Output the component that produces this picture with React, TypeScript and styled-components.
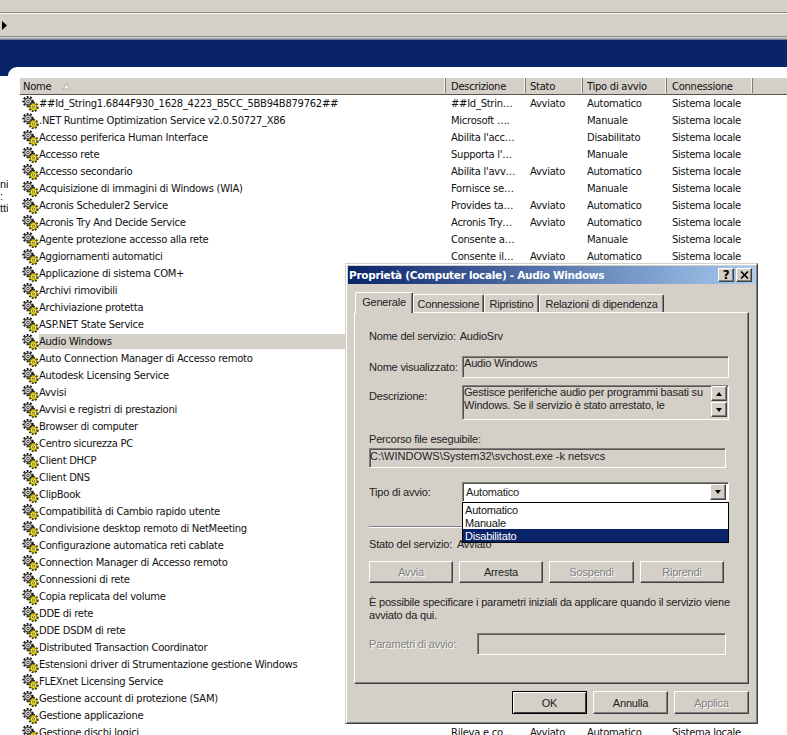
import React from "react";
import styled, { createGlobalStyle } from "styled-components";

const FACE = "#d4d0c8";
const NAVY = "#0a246a";
const COLUMNS = "426px 80px 57px 84px 86px 1fr";

const Global = createGlobalStyle`
  html, body { margin: 0; padding: 0; background: #fff; }
  body { width: 787px; height: 735px; overflow: hidden; }
  #root { width: 787px; height: 735px; overflow: hidden; }
`;

const Page = styled.div`
  position: relative;
  width: 787px;
  height: 735px;
  overflow: hidden;
  display: flex;
  flex-direction: column;
  background: #fff;
  font-family: "DejaVu Sans", Verdana, sans-serif;
  font-size: 10px;
  letter-spacing: -0.28px;
  color: #111;
`;

const MenuStrip = styled.div`
  height: 12px;
  flex: none;
  background: ${FACE};
  border-bottom: 1px solid #8c8a84;
  box-shadow: inset 0 -1px 0 ${FACE};
`;

const ToolStrip = styled.div`
  height: 22px;
  flex: none;
  display: flex;
  align-items: center;
  padding-left: 2px;
  background: ${FACE};
  border-top: 1px solid #f4f3ef;
  border-bottom: 1px solid #8c8a84;
`;

const Shade = styled.div`
  height: 3px;
  flex: none;
  background: linear-gradient(#e8e6e0, #5d6a8c);
`;

const Banner = styled.div`
  height: 27px;
  flex: none;
  background: ${NAVY};
`;

const Workspace = styled.div`
  flex: 1;
  min-height: 0;
  display: flex;
  background: linear-gradient(${NAVY} 9px, #fff 9px);
`;

const Gutter = styled.div`
  width: 8px;
  flex: none;
  overflow: hidden;
  padding-top: 111px;
  font-family: "Liberation Sans", Arial, sans-serif;
  font-size: 11px;
  letter-spacing: 0;
  line-height: 12px;
`;

const Panel = styled.div`
  flex: 1;
  min-width: 0;
  background: #fff;
  border-top-left-radius: 9px;
  padding: 11px 0 0 12px;
  overflow: hidden;
`;

const HeaderRow = styled.div`
  display: grid;
  grid-template-columns: ${COLUMNS};
  height: 15px;
  padding-bottom: 1px;
  background: ${FACE};
  border-bottom: 1px solid #55534e;
`;

const HeaderCell = styled.div<{ $pad: number }>`
  display: flex;
  align-items: center;
  gap: 11px;
  padding-top: 1px;
  padding-left: ${(p) => p.$pad}px;
  border-right: 1px solid #7d7b76;
  box-shadow: inset -1px 0 0 #f4f3ef;
  white-space: nowrap;
  overflow: hidden;
  &:last-child { border-right: none; box-shadow: none; }
`;

const Row = styled.div`
  display: grid;
  grid-template-columns: ${COLUMNS};
  height: 17px;
  align-items: center;
  white-space: nowrap;
`;

const NameCell = styled.div`
  display: flex;
  align-items: center;
  height: 17px;
  padding-left: 2px;
`;

const NameText = styled.span<{ $selected?: boolean }>`
  flex: 1;
  line-height: 15px;
  background: ${(p) => (p.$selected ? FACE : "transparent")};
`;

const Cell = styled.div<{ $pad: number }>`
  padding-left: ${(p) => p.$pad}px;
  line-height: 15px;
  overflow: hidden;
`;

const Dialog = styled.div`
  position: absolute;
  left: 345px;
  top: 263px;
  width: 413px;
  height: 461px;
  box-sizing: border-box;
  background: ${FACE};
  border: 1px solid;
  border-color: ${FACE} #404040 #404040 ${FACE};
  box-shadow: inset 1px 1px 0 #fff, inset -1px -1px 0 #808080;
  padding: 2px 2px 0 2px;
  display: flex;
  flex-direction: column;
  font-family: "Liberation Sans", Arial, sans-serif;
  font-size: 11px;
  letter-spacing: -0.2px;
  color: #222;
`;

const TitleBar = styled.div`
  height: 18px;
  flex: none;
  display: flex;
  align-items: center;
  justify-content: space-between;
  padding: 0 3px 0 1px;
  background: linear-gradient(90deg, ${NAVY}, #a6caf0);
  color: #fff;
  font-family: "DejaVu Sans", Verdana, sans-serif;
  font-size: 10.5px;
  font-weight: 700;
  letter-spacing: -0.3px;
  white-space: nowrap;
`;

const TitleButtons = styled.div`
  display: flex;
  gap: 2px;
`;

const raised = `
  background: ${FACE};
  border: 1px solid;
  border-color: #fff #404040 #404040 #fff;
  box-shadow: inset -1px -1px 0 #808080;
  box-sizing: border-box;
`;

const sunken = `
  border: 1px solid;
  border-color: #808080 #fff #fff #808080;
  box-shadow: inset 1px 1px 0 #55534e;
  box-sizing: border-box;
`;

const TitleButton = styled.div`
  ${raised}
  width: 16px;
  height: 14px;
  display: flex;
  align-items: center;
  justify-content: center;
  color: #000;
  font-size: 12px;
`;

const DialogBody = styled.div`
  flex: 1;
  padding: 8px 6px 0 6px;
  display: flex;
  flex-direction: column;
`;

const TabStrip = styled.div`
  height: 20px;
  flex: none;
  display: flex;
  align-items: flex-end;
  padding-left: 1px;
  position: relative;
  z-index: 1;
`;

const Tab = styled.div<{ $active?: boolean; $width: number }>`
  width: ${(p) => p.$width}px;
  height: ${(p) => (p.$active ? 21 : 18)}px;
  margin-bottom: ${(p) => (p.$active ? -1 : 0)}px;
  box-sizing: border-box;
  background: ${FACE};
  border: 1px solid;
  border-color: #fff #404040 transparent #fff;
  border-bottom: none;
  box-shadow: inset -1px 0 0 #808080;
  border-radius: 2px 2px 0 0;
  display: flex;
  justify-content: center;
  padding-top: 3px;
  white-space: nowrap;
`;

const TabPage = styled.div`
  height: 372px;
  flex: none;
  box-sizing: border-box;
  border: 1px solid;
  border-color: #fff #404040 #404040 #fff;
  box-shadow: inset -1px -1px 0 #808080;
  padding: 15px 18px 0 14px;
`;

const FormRow = styled.div<{ $top: number; $height: number }>`
  display: grid;
  grid-template-columns: 93px 267px;
  align-items: center;
  margin-top: ${(p) => p.$top}px;
  height: ${(p) => p.$height}px;
  white-space: nowrap;
  position: relative;
`;

const Label = styled.div<{ $disabled?: boolean }>`
  color: ${(p) => (p.$disabled ? "#808080" : "inherit")};
  text-shadow: ${(p) => (p.$disabled ? "1px 1px 0 #fff" : "none")};
`;

const TopLabel = styled(Label)`
  align-self: start;
  margin-top: 5px;
`;

const PlainLine = styled.div<{ $top: number; $height: number }>`
  margin-top: ${(p) => p.$top}px;
  height: ${(p) => p.$height}px;
  line-height: ${(p) => p.$height}px;
  white-space: nowrap;
`;

const Value = styled.span<{ $left: number }>`
  margin-left: ${(p) => p.$left}px;
`;

const ReadField = styled.div`
  ${sunken}
  height: 100%;
  padding: 0 1px;
  line-height: 13px;
  overflow: hidden;
  white-space: normal;
`;

const DescriptionField = styled(ReadField)`
  display: flex;
  justify-content: space-between;
  padding: 0 1px 0 1px;
`;

const SpinColumn = styled.div`
  display: flex;
  flex-direction: column;
  gap: 1px;
  flex: none;
`;

const SpinButton = styled.div`
  ${raised}
  width: 16px;
  height: 15px;
  display: flex;
  align-items: center;
  justify-content: center;
`;

const PathField = styled(ReadField)`
  width: 357px;
  height: 20px;
  margin-top: 2px;
  padding: 1px 0;
  letter-spacing: 0;
`;

const SelectBox = styled.div`
  ${sunken}
  height: 100%;
  background: #fff;
  position: relative;
  display: flex;
  align-items: center;
  justify-content: space-between;
  padding: 0 2px 0 3px;
`;

const SelectArrow = styled(SpinButton)`
  height: 16px;
`;

const DropList = styled.div`
  position: absolute;
  left: -1px;
  top: calc(100% + 1px);
  width: 267px;
  box-sizing: border-box;
  background: #fff;
  border: 1px solid #000;
  z-index: 2;
`;

const DropItem = styled.div<{ $selected?: boolean }>`
  height: 13px;
  line-height: 15px;
  padding-left: 2px;
  background: ${(p) => (p.$selected ? NAVY : "#fff")};
  color: ${(p) => (p.$selected ? "#fff" : "#111")};
`;

const Separator = styled.div`
  width: 357px;
  height: 1px;
  margin-top: 24px;
  background: #808080;
  border-bottom: 1px solid #fff;
`;

const ActionRow = styled.div`
  display: flex;
  gap: 6px;
  width: 357px;
  margin-top: 9px;
`;

const ActionButton = styled.div<{ $disabled?: boolean; $width?: number }>`
  ${raised}
  width: ${(p) => p.$width ?? 84}px;
  height: 22px;
  display: flex;
  align-items: center;
  justify-content: center;
  color: ${(p) => (p.$disabled ? "#808080" : "#222")};
  text-shadow: ${(p) => (p.$disabled ? "1px 1px 0 #fff" : "none")};
`;

const Paragraph = styled.div`
  width: 366px;
  margin-top: 13px;
  line-height: 13px;
  height: 26px;
`;

const ParamRow = styled.div`
  display: flex;
  align-items: center;
  justify-content: space-between;
  width: 357px;
  height: 22px;
  margin-top: 11px;
`;

const ParamField = styled.div`
  ${sunken}
  width: 249px;
  height: 22px;
`;

const Footer = styled.div`
  display: flex;
  justify-content: flex-end;
  gap: 6px;
  margin-top: 7px;
`;

const DefaultButton = styled(ActionButton)`
  height: 23px;
  border: 1px solid #000;
  box-shadow: inset 1px 1px 0 #fff, inset -1px -1px 0 #404040;
`;

const FooterButton = styled(ActionButton)`
  height: 23px;
`;

const GearIcon = () => (
  <svg width="17" height="16" viewBox="0 0 17 16" style={{ flex: "none" }}>
    <circle cx="6" cy="5.5" r="4.6" fill="none" stroke="#1c1c1c" strokeWidth="2.2" strokeDasharray="1.8 1.5" />
    <circle cx="6" cy="5.5" r="3.5" fill="#cfcdc5" stroke="#3a3a3a" strokeWidth="1" />
    <circle cx="6" cy="5.5" r="1.2" fill="#fff" stroke="#222" strokeWidth="0.8" />
    <circle cx="11.5" cy="11" r="4" fill="none" stroke="#33310c" strokeWidth="2.4" strokeDasharray="1.7 1.3" />
    <circle cx="11.5" cy="11" r="3.4" fill="#f2e218" stroke="#6e650c" strokeWidth="0.8" />
    <circle cx="11.5" cy="11" r="1.1" fill="#fff" stroke="#4c4606" strokeWidth="0.7" />
  </svg>
);

const UpTri = () => (
  <svg width="8" height="6" viewBox="0 0 8 6"><path d="M4 1 7 5H1Z" fill="#000" /></svg>
);
const DownTri = () => (
  <svg width="8" height="6" viewBox="0 0 8 6"><path d="M1 1H7L4 5Z" fill="#000" /></svg>
);

type Svc = [string, string?, string?, string?];
const services: Svc[] = [
  ["##Id_String1.6844F930_1628_4223_B5CC_5BB94B879762##", "##Id_Strin…", "Avviato", "Automatico"],
  [".NET Runtime Optimization Service v2.0.50727_X86", "Microsoft ….", "", "Manuale"],
  ["Accesso periferica Human Interface", "Abilita l'acc…", "", "Disabilitato"],
  ["Accesso rete", "Supporta l'…", "", "Manuale"],
  ["Accesso secondario", "Abilita l'avv…", "Avviato", "Automatico"],
  ["Acquisizione di immagini di Windows (WIA)", "Fornisce se…", "", "Manuale"],
  ["Acronis Scheduler2 Service", "Provides ta…", "Avviato", "Automatico"],
  ["Acronis Try And Decide Service", "Acronis Try…", "Avviato", "Automatico"],
  ["Agente protezione accesso alla rete", "Consente a…", "", "Manuale"],
  ["Aggiornamenti automatici", "Consente il…", "Avviato", "Automatico"],
  ["Applicazione di sistema COM+"],
  ["Archivi rimovibili"],
  ["Archiviazione protetta"],
  ["ASP.NET State Service"],
  ["Audio Windows"],
  ["Auto Connection Manager di Accesso remoto"],
  ["Autodesk Licensing Service"],
  ["Avvisi"],
  ["Avvisi e registri di prestazioni"],
  ["Browser di computer"],
  ["Centro sicurezza PC"],
  ["Client DHCP"],
  ["Client DNS"],
  ["ClipBook"],
  ["Compatibilità di Cambio rapido utente"],
  ["Condivisione desktop remoto di NetMeeting"],
  ["Configurazione automatica reti cablate"],
  ["Connection Manager di Accesso remoto"],
  ["Connessioni di rete"],
  ["Copia replicata del volume"],
  ["DDE di rete"],
  ["DDE DSDM di rete"],
  ["Distributed Transaction Coordinator"],
  ["Estensioni driver di Strumentazione gestione Windows"],
  ["FLEXnet Licensing Service"],
  ["Gestione account di protezione (SAM)"],
  ["Gestione applicazione"],
  ["Gestione dischi logici", "Rileva e co…", "Avviato", "Automatico"],
];

export default function App() {
  return (
    <Page>
      <Global />
      <MenuStrip />
      <ToolStrip>
        <svg width="5" height="9" viewBox="0 0 5 9"><path d="M0 0 5 4.5 0 9Z" fill="#000" /></svg>
      </ToolStrip>
      <Shade />
      <Banner />
      <Workspace>
        <Gutter>
          <div>ni</div>
          <div>:</div>
          <div>tti</div>
        </Gutter>
        <Panel>
          <HeaderRow>
            <HeaderCell $pad={3}>
              Nome
              <svg width="9" height="8" viewBox="0 0 9 8"><path d="M4.5 1 8 7H1Z" fill="#eeece6" stroke="#a8a69f" strokeWidth="0.8" /></svg>
            </HeaderCell>
            <HeaderCell $pad={5}>Descrizione</HeaderCell>
            <HeaderCell $pad={4}>Stato</HeaderCell>
            <HeaderCell $pad={4}>Tipo di avvio</HeaderCell>
            <HeaderCell $pad={5}>Connessione</HeaderCell>
            <HeaderCell $pad={0} />
          </HeaderRow>
          {services.map(([name, desc, state, start]) => (
            <Row key={name}>
              <NameCell>
                <GearIcon />
                <NameText $selected={name === "Audio Windows"}>{name}</NameText>
              </NameCell>
              <Cell $pad={5}>{desc}</Cell>
              <Cell $pad={4}>{state}</Cell>
              <Cell $pad={4}>{start}</Cell>
              <Cell $pad={5}>{desc ? "Sistema locale" : ""}</Cell>
            </Row>
          ))}
        </Panel>
      </Workspace>

      <Dialog>
        <TitleBar>
          Proprietà (Computer locale) - Audio Windows
          <TitleButtons>
            <TitleButton>?</TitleButton>
            <TitleButton>
              <svg width="9" height="8" viewBox="0 0 9 8"><path d="M1 0.5 8 7.5M8 0.5 1 7.5" stroke="#000" strokeWidth="1.6" /></svg>
            </TitleButton>
          </TitleButtons>
        </TitleBar>
        <DialogBody>
          <TabStrip>
            <Tab $active $width={58}>Generale</Tab>
            <Tab $width={71}>Connessione</Tab>
            <Tab $width={55}>Ripristino</Tab>
            <Tab $width={125}>Relazioni di dipendenza</Tab>
          </TabStrip>
          <TabPage>
            <PlainLine $top={0} $height={16}>
              Nome del servizio: <Value $left={1}>AudioSrv</Value>
            </PlainLine>
            <FormRow $top={12} $height={22}>
              <Label>Nome visualizzato:</Label>
              <ReadField>Audio Windows</ReadField>
            </FormRow>
            <FormRow $top={7} $height={35}>
              <TopLabel>Descrizione:</TopLabel>
              <DescriptionField>
                <div>Gestisce periferiche audio per programmi basati su Windows. Se il servizio è stato arrestato, le</div>
                <SpinColumn>
                  <SpinButton><UpTri /></SpinButton>
                  <SpinButton><DownTri /></SpinButton>
                </SpinColumn>
              </DescriptionField>
            </FormRow>
            <PlainLine $top={12} $height={14}>Percorso file eseguibile:</PlainLine>
            <PathField>C:\WINDOWS\System32\svchost.exe -k netsvcs</PathField>
            <FormRow $top={14} $height={20}>
              <Label>Tipo di avvio:</Label>
              <SelectBox>
                Automatico
                <SelectArrow><DownTri /></SelectArrow>
                <DropList>
                  <DropItem>Automatico</DropItem>
                  <DropItem>Manuale</DropItem>
                  <DropItem $selected>Disabilitato</DropItem>
                </DropList>
              </SelectBox>
            </FormRow>
            <Separator />
            <PlainLine $top={8} $height={16}>
              Stato del servizio: <Value $left={2}>Avviato</Value>
            </PlainLine>
            <ActionRow>
              <ActionButton $disabled>Avvia</ActionButton>
              <ActionButton>Arresta</ActionButton>
              <ActionButton $disabled $width={85}>Sospendi</ActionButton>
              <ActionButton $disabled>Riprendi</ActionButton>
            </ActionRow>
            <Paragraph>
              È possibile specificare i parametri iniziali da applicare quando il servizio viene avviato da qui.
            </Paragraph>
            <ParamRow>
              <Label $disabled>Parametri di avvio:</Label>
              <ParamField />
            </ParamRow>
          </TabPage>
          <Footer>
            <DefaultButton $width={75}>OK</DefaultButton>
            <FooterButton $width={75}>Annulla</FooterButton>
            <FooterButton $width={75} $disabled>Applica</FooterButton>
          </Footer>
        </DialogBody>
      </Dialog>
    </Page>
  );
}
